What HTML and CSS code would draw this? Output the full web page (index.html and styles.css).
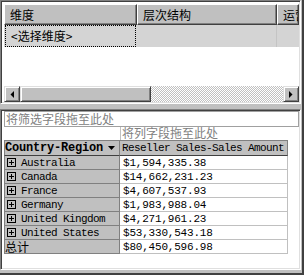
FILE: index.html
```html
<!DOCTYPE html>
<html>
<head>
<meta charset="utf-8">
<link rel="stylesheet" href="styles.css">
</head>
<body>
<div class="app">
  <div class="pane top">
    <div class="grid-head">
      <div class="hcell c1">维度</div>
      <div class="hcell c2">层次结构</div>
      <div class="hcell c3">运营</div>
    </div>
    <div class="grid-row">
      <div class="rcell c1"><span class="focus">&lt;选择维度&gt;</span></div>
      <div class="rcell c2"></div>
      <div class="rcell c3"></div>
    </div>
    <div class="hscroll">
      <div class="sbtn"><svg width="4" height="7" viewBox="0 0 4 7"><path d="M4 0 L4 7 L0.5 3.5 Z" fill="#000"/></svg></div>
      <div class="thumb"></div>
      <div class="track"></div>
      <div class="sbtn"><svg width="4" height="7" viewBox="0 0 4 7"><path d="M0 0 L0 7 L3.5 3.5 Z" fill="#000"/></svg></div>
    </div>
  </div>
  <div class="splitter"></div>
  <div class="pane bottom">
    <div class="filter-zone">将筛选字段拖至此处</div>
    <div class="col-zone"><div class="col-spacer"></div><div class="col-label">将列字段拖至此处</div></div>
    <div class="pivot">
      <div class="th th1"><span>Country-Region</span><svg class="dd" width="7" height="4" viewBox="0 0 7 4"><path d="M0 0 H7 L3.5 4 Z" fill="#000"/></svg></div>
      <div class="th th2">Reseller Sales-Sales Amount</div>

      <div class="rh"><svg class="plus" width="9" height="9" viewBox="0 0 9 9"><rect x="0.5" y="0.5" width="8" height="8" fill="none" stroke="#000"/><path d="M2 4.5 H7 M4.5 2 V7" stroke="#000"/></svg>Australia</div>
      <div class="rv">$1,594,335.38</div>

      <div class="rh"><svg class="plus" width="9" height="9" viewBox="0 0 9 9"><rect x="0.5" y="0.5" width="8" height="8" fill="none" stroke="#000"/><path d="M2 4.5 H7 M4.5 2 V7" stroke="#000"/></svg>Canada</div>
      <div class="rv">$14,662,231.23</div>

      <div class="rh"><svg class="plus" width="9" height="9" viewBox="0 0 9 9"><rect x="0.5" y="0.5" width="8" height="8" fill="none" stroke="#000"/><path d="M2 4.5 H7 M4.5 2 V7" stroke="#000"/></svg>France</div>
      <div class="rv">$4,607,537.93</div>

      <div class="rh"><svg class="plus" width="9" height="9" viewBox="0 0 9 9"><rect x="0.5" y="0.5" width="8" height="8" fill="none" stroke="#000"/><path d="M2 4.5 H7 M4.5 2 V7" stroke="#000"/></svg>Germany</div>
      <div class="rv">$1,983,988.04</div>

      <div class="rh"><svg class="plus" width="9" height="9" viewBox="0 0 9 9"><rect x="0.5" y="0.5" width="8" height="8" fill="none" stroke="#000"/><path d="M2 4.5 H7 M4.5 2 V7" stroke="#000"/></svg>United Kingdom</div>
      <div class="rv">$4,271,961.23</div>

      <div class="rh"><svg class="plus" width="9" height="9" viewBox="0 0 9 9"><rect x="0.5" y="0.5" width="8" height="8" fill="none" stroke="#000"/><path d="M2 4.5 H7 M4.5 2 V7" stroke="#000"/></svg>United States</div>
      <div class="rv">$53,330,543.18</div>

      <div class="rh total">总计</div>
      <div class="rv">$80,450,596.98</div>
    </div>
  </div>
</div>
</body>
</html>
```
FILE: styles.css
```css
* { box-sizing: border-box; }
body {
  margin: 0;
  background: #c0c0c0;
  font-family: "Noto Sans CJK SC", sans-serif;
  font-size: 12px;
  color: #000;
}
.app {
  width: 304px;
  height: 275px;
  display: flex;
  flex-direction: column;
  padding: 0 1px 3px 0;
  border-right: 2px solid #404040;
  border-bottom: 2px solid #404040;
  background: #c0c0c0;
}
.pane {
  background: #fff;
  border: 1px solid;
  border-color: #808080 #fff #fff #808080;
  box-shadow: inset 1px 1px 0 #404040, inset -1px -1px 0 #dfdfdf;
}
.pane.top {
  height: 104px;
  flex: none;
  padding: 3px 1px 1px 3px;
  display: flex;
  flex-direction: column;
  overflow: hidden;
}
.grid-head, .grid-row { display: flex; flex: none; }
.hcell {
  height: 21px;
  background: #c0c0c0;
  border: 1px solid;
  border-color: #fff #404040 #404040 #fff;
  box-shadow: inset -1px -1px 0 #808080;
  padding: 0 5px;
  line-height: 19px;
  white-space: nowrap;
  overflow: hidden;
}
.c1 { width: 133px; flex: none; }
.c2 { width: 140px; flex: none; }
.c3 { flex: 1; min-width: 0; }
.rcell {
  height: 22px;
  background: #d4d4d4;
  border-right: 1px solid #c4c4c4;
}
.rcell.c1 { padding: 0 1px 0 1px; border-right: none; }
.rcell.c3 { border-right: none; }
.focus {
  display: block;
  height: 22px;
  border: 1px dotted #000;
  padding-left: 5px;
  line-height: 19px;
}
.hscroll {
  margin-top: auto;
  height: 16px;
  display: flex;
  flex: none;
}
.sbtn, .thumb {
  height: 16px;
  background: #c0c0c0;
  border: 1px solid;
  border-color: #dfdfdf #404040 #404040 #dfdfdf;
  box-shadow: inset 1px 1px 0 #fff, inset -1px -1px 0 #808080;
}
.sbtn {
  width: 16px;
  flex: none;
  display: flex;
  align-items: center;
  justify-content: center;
}
.thumb { width: 131px; flex: none; }
.track {
  flex: 1;
  background: repeating-conic-gradient(#fff 0 25%, #c0c0c0 0 50%) 0 0 / 2px 2px;
}
.splitter { height: 5px; flex: none; }
.pane.bottom {
  flex: 1;
  padding: 1px 1px 1px 3px;
  display: flex;
  flex-direction: column;
}
.filter-zone {
  height: 16px;
  flex: none;
  border: 1px solid #a0a0a0;
  color: #808080;
  line-height: 13px;
  padding-left: 1px;
  white-space: nowrap;
}
.col-zone { display: flex; height: 13px; flex: none; }
.col-spacer { width: 116px; flex: none; }
.col-label {
  border-left: 1px solid #c0c0c0;
  color: #808080;
  line-height: 12px;
  padding-left: 1px;
  white-space: nowrap;
}
.pivot {
  display: grid;
  grid-template-columns: 116px 168px;
  grid-template-rows: 16px repeat(7, 14px);
}
.th {
  background: #c0c0c0;
  border-top: 1px solid #808080;
  border-bottom: 1px solid #404040;
  border-right: 1px solid #808080;
  white-space: nowrap;
  overflow: hidden;
  display: flex;
  align-items: center;
}
.th1 {
  border-left: 1px solid #808080;
  font-family: "Liberation Mono", monospace;
  font-weight: bold;
  font-size: 12px;
  letter-spacing: -0.2px;
  padding-left: 0;
}
.th1 .dd { margin-left: 5px; }
.th2 {
  font-family: "Liberation Mono", monospace;
  font-size: 11px;
  letter-spacing: -0.6px;
  padding-left: 2px;
}
.rh {
  background: #c0c0c0;
  border-left: 1px solid #808080;
  border-right: 1px solid #808080;
  border-bottom: 1px solid #808080;
  font-family: "Liberation Mono", monospace;
  font-size: 11px;
  letter-spacing: -0.6px;
  display: flex;
  align-items: center;
  white-space: nowrap;
}
.rh .plus { margin: 0 5px 0 2px; flex: none; }
.rh.total {
  font-family: "Noto Sans CJK SC", sans-serif;
  font-size: 12px;
  letter-spacing: 0;
  padding-left: 0;
}
.rv {
  background: #fff;
  border-right: 1px solid #c0c0c0;
  border-bottom: 1px solid #c0c0c0;
  font-family: "Liberation Mono", monospace;
  font-size: 11px;
  letter-spacing: -0.2px;
  padding-left: 3px;
  display: flex;
  align-items: center;
  white-space: nowrap;
}
```
